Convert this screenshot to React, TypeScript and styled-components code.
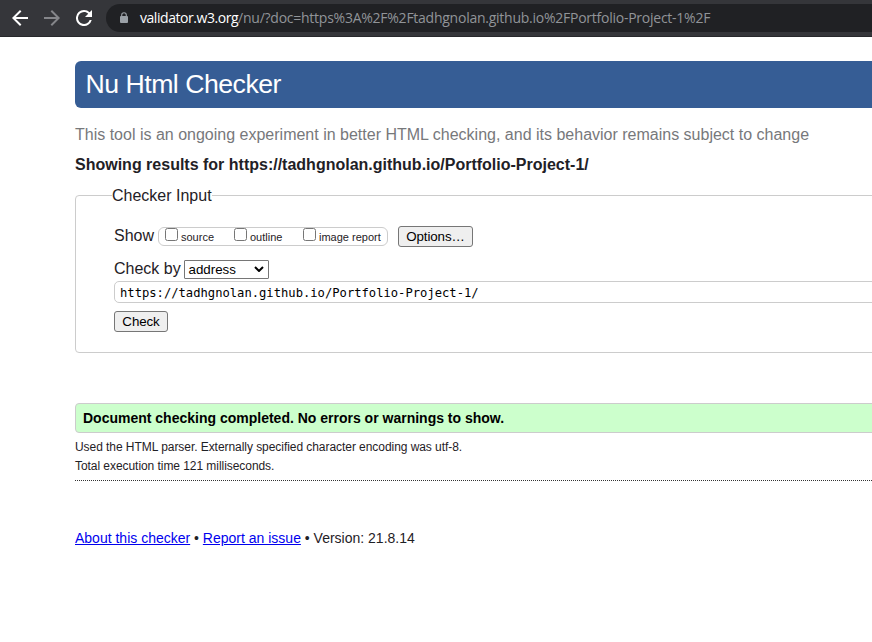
import React from "react";
import styled, { createGlobalStyle } from "styled-components";

const GlobalStyle = createGlobalStyle`
  * { box-sizing: border-box; }
  html, body { margin: 0; background: #fff; overflow: hidden; }
  body { font-family: "Liberation Sans", Arial, sans-serif; color: #1f2126; }
`;

const Page = styled.div`
  width: 100%;
  height: 642px;
  overflow: hidden;
  white-space: nowrap;
`;

const Toolbar = styled.div`
  display: flex;
  align-items: flex-start;
  height: 37px;
  padding: 4px 0 0 12px;
  background: #35363a;
  border-bottom: 1px solid #27282b;
`;

const NavIcon = styled.svg<{ $color: string }>`
  display: block;
  flex: none;
  width: 16px;
  height: 16px;
  margin: 6px 16px 0 0;
  fill: ${(p) => p.$color};
`;

const AddressBar = styled.div`
  display: flex;
  flex: none;
  align-items: center;
  width: 800px;
  height: 28px;
  margin-left: -2px;
  padding-left: 13px;
  border-radius: 14px;
  background: #202124;
`;

const Lock = styled.svg`
  display: block;
  width: 10px;
  height: 12px;
  margin-right: 11px;
`;

const Url = styled.span<{ $bright?: boolean; $spacing: number }>`
  font: 14px/20px "Open Sans", "Noto Sans", sans-serif;
  letter-spacing: ${(p) => p.$spacing}px;
  color: ${(p) => (p.$bright ? "#fff" : "#919498")};
`;

const Main = styled.main`
  width: 1000px;
  padding: 24px 0 0 75px;
`;

const Title = styled.h1`
  height: 47px;
  margin: 0;
  padding-left: 10.5px;
  border-radius: 6px;
  background: #365d95;
  color: #fff;
  font-size: 26.67px;
  font-weight: 400;
  letter-spacing: -0.5px;
  line-height: 46px;
`;

const Intro = styled.p`
  margin: 17px 0 0;
  font-size: 16px;
  line-height: 20px;
  color: #77787b;
`;

const Results = styled.h2`
  margin: 9px 0 0;
  font-size: 16px;
  line-height: 22px;
`;

const InputPanel = styled.fieldset`
  height: 167px;
  margin: 10px 0 0;
  padding: 21px 0 0 38px;
  border: 1px solid #ccc;
  border-radius: 4px;
`;

const Legend = styled.legend`
  margin-left: -2px;
  padding: 0;
  font-size: 16px;
  line-height: 19px;
`;

const ShowRow = styled.div`
  display: flex;
  align-items: center;
  height: 21px;
`;

const Label = styled.span<{ $width: number }>`
  flex: none;
  width: ${(p) => p.$width}px;
  padding-bottom: 2px;
  font-size: 16px;
  line-height: 19px;
`;

const ShowGroup = styled.div`
  display: flex;
  width: 230px;
  height: 19px;
  margin-right: 10px;
  padding-left: 6px;
  border: 1px solid #ccc;
  border-radius: 6px;
`;

const ShowOption = styled.label`
  display: flex;
  flex: none;
  width: 69px;
  font-size: 11px;
  line-height: 18px;
`;

const Checkbox = styled.input`
  flex: none;
  width: 13px;
  height: 13px;
  margin: 0 3px 0 0;
`;

const Button = styled.button<{ $width: number }>`
  display: block;
  width: ${(p) => p.$width}px;
  height: 21px;
  padding: 0;
  border: 1px solid #767676;
  border-radius: 3px;
  background: #efefef;
  color: #000;
  font: 13.33px/18px "Liberation Sans", Arial, sans-serif;
  letter-spacing: -0.1px;
`;

const MethodRow = styled.div`
  display: flex;
  align-items: center;
  height: 19px;
  margin-top: 13px;
`;

const Method = styled.div`
  display: flex;
  align-items: center;
  justify-content: space-between;
  width: 85px;
  height: 19px;
  padding: 0 4px 0 3.5px;
  border: 1px solid #767676;
  border-radius: 1px;
  color: #000;
  font-size: 13.33px;
  line-height: 17px;
`;

const Chevron = styled.svg`
  width: 10px;
  height: 6px;
  margin-bottom: 1px;
  fill: none;
  stroke: #000;
  stroke-width: 2;
`;

const DocInput = styled.input`
  display: block;
  width: 900px;
  height: 22px;
  margin: 2px 0 8px;
  padding: 1px 5px 0;
  border: 1px solid #ccc;
  border-radius: 5px;
  background: #fff;
  color: #000;
  font: 12.17px "DejaVu Sans Mono", monospace;
`;

const Success = styled.p`
  height: 30px;
  margin: 50px 0 0;
  padding-left: 7px;
  border: 1px solid #ccc;
  border-radius: 4px;
  background: #cfc;
  color: #000;
  font-size: 14px;
  font-weight: 700;
  line-height: 29px;
`;

const Details = styled.div`
  height: 48px;
  padding-top: 5px;
  border-bottom: 1px dotted #333;
  font-size: 12px;
  letter-spacing: -0.055px;
  line-height: 19px;
`;

const Footer = styled.footer`
  margin-top: 47px;
  font-size: 14px;
  line-height: 20px;
`;

const Link = styled.a`
  color: #0000ee;
  text-decoration: underline;
`;

const showOptions = ["source", "outline", "image report"];

export default function App() {
  return (
    <Page>
      <GlobalStyle />
      <Toolbar>
        <NavIcon viewBox="4 4 16 16" $color="#fff">
          <path d="M20 11H7.83l5.59-5.59L12 4l-8 8 8 8 1.41-1.41L7.83 13H20v-2z" />
        </NavIcon>
        <NavIcon viewBox="4 4 16 16" $color="#85868a">
          <path d="M12 4l-1.41 1.41L16.17 11H4v2h12.17l-5.58 5.59L12 20l8-8z" />
        </NavIcon>
        <NavIcon viewBox="4 4 16 16" $color="#fff">
          <path d="M17.65 6.35A7.96 7.96 0 0 0 12 4a8 8 0 1 0 7.73 10h-2.08A6 6 0 1 1 12 6c1.66 0 3.14.69 4.22 1.78L13 11h7V4l-2.35 2.35z" />
        </NavIcon>
        <AddressBar>
          <Lock viewBox="0 0 10 12">
            <rect x="1" y="4" width="8" height="7" rx="1" fill="#9aa0a6" />
            <path d="M2.7 5V3a2.3 2.3 0 0 1 4.6 0v2" fill="none" stroke="#9aa0a6" strokeWidth="1.1" />
          </Lock>
          <Url $bright $spacing={-0.45}>validator.w3.org</Url>
          <Url $spacing={-0.25}>/nu/?doc=https%3A%2F%2Ftadhgnolan.github.io%2FPortfolio-Project-1%2F</Url>
        </AddressBar>
      </Toolbar>
      <Main>
        <Title>Nu Html Checker</Title>
        <Intro>This tool is an ongoing experiment in better HTML checking, and its behavior remains subject to change</Intro>
        <Results>Showing results for https://tadhgnolan.github.io/Portfolio-Project-1/</Results>
        <InputPanel>
          <Legend>Checker Input</Legend>
          <ShowRow>
            <Label $width={44}>Show</Label>
            <ShowGroup>
              {showOptions.map((name) => (
                <ShowOption key={name}>
                  <Checkbox type="checkbox" />
                  {name}
                </ShowOption>
              ))}
            </ShowGroup>
            <Button $width={75}>Options…</Button>
          </ShowRow>
          <MethodRow>
            <Label $width={70}>Check by</Label>
            <Method>
              address
              <Chevron viewBox="0 0 10 6">
                <path d="M1 1l4 4 4-4" />
              </Chevron>
            </Method>
          </MethodRow>
          <DocInput readOnly value="https://tadhgnolan.github.io/Portfolio-Project-1/" />
          <Button $width={54}>Check</Button>
        </InputPanel>
        <Success>Document checking completed. No errors or warnings to show.</Success>
        <Details>
          <div>Used the HTML parser. Externally specified character encoding was utf-8.</div>
          <div>Total execution time 121 milliseconds.</div>
        </Details>
        <Footer>
          <Link href="#about">About this checker</Link> • <Link href="#issue">Report an issue</Link> • Version: 21.8.14
        </Footer>
      </Main>
    </Page>
  );
}
